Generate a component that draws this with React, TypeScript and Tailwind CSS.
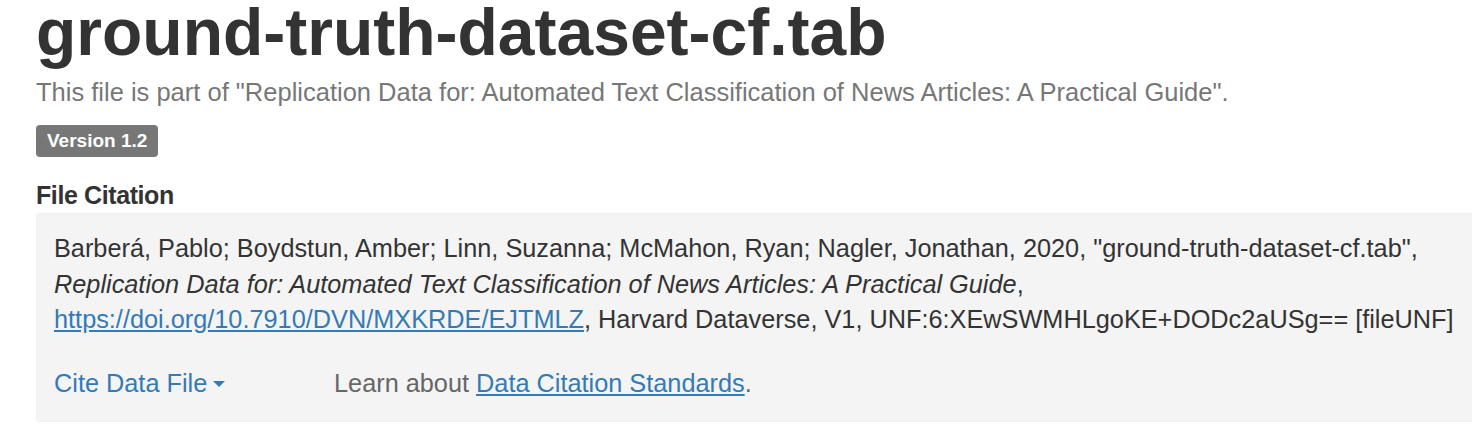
const font = { fontFamily: '"Liberation Sans", Arial, sans-serif' };

export default function App() {
  return (
    <div className="bg-white w-[1472px] h-[428px] overflow-hidden pl-[36px] text-[#333]" style={font}>
      {/* Title */}
      <h1 className="text-[66px] font-bold leading-[60px] mt-[2px] text-[#333]">
        ground-truth-dataset-cf.tab
      </h1>
      <p className="text-[25.5px] leading-[30px] text-[#777] mt-[15px]">
        This file is part of "Replication Data for: Automated Text Classification of News Articles: A Practical Guide".
      </p>

      <div className="mt-[18px] h-[32px]">
        <span className="inline-flex items-center h-[32px] px-[11px] rounded-[4px] bg-[#777] text-white text-[19px] font-bold">
          Version 1.2
        </span>
      </div>

      <h2 className="text-[25px] font-bold tracking-[-0.4px] leading-[30px] mt-[23px] text-[#333]">File Citation</h2>

      {/* Citation panel runs past the right edge, as in the page */}
      <div className="mt-[3px] bg-[#f4f4f4] w-[1480px] h-[209px] rounded-[3px] border border-[#f0f0f0] px-[17px] pt-[17px] text-[25.3px] leading-[35.5px] text-[#333]">
        <p className="whitespace-nowrap">
          Barberá, Pablo; Boydstun, Amber; Linn, Suzanna; McMahon, Ryan; Nagler, Jonathan, 2020, "ground-truth-dataset-cf.tab",
          <br />
          <em>Replication Data for: Automated Text Classification of News Articles: A Practical Guide</em>,
          <br />
          <a href="#" className="text-[#337ab7] underline">
            https://doi.org/10.7910/DVN/MXKRDE/EJTMLZ
          </a>
          , Harvard Dataverse, V1, UNF:6:XEwSWMHLgoKE+DODc2aUSg== [fileUNF]
        </p>
        <div className="flex items-center mt-[28px]">
          <button className="flex items-center text-[#337ab7] leading-[35.5px] w-[280px]">
            Cite Data File
            <span className="ml-[6px] mt-[2px] w-0 h-0 border-l-[6px] border-r-[6px] border-t-[6px] border-l-transparent border-r-transparent border-t-[#337ab7]" />
          </button>
          <span className="text-[#666]">
            Learn about{" "}
            <a href="#" className="text-[#337ab7] underline">
              Data Citation Standards
            </a>
            .
          </span>
        </div>
      </div>
    </div>
  );
}
